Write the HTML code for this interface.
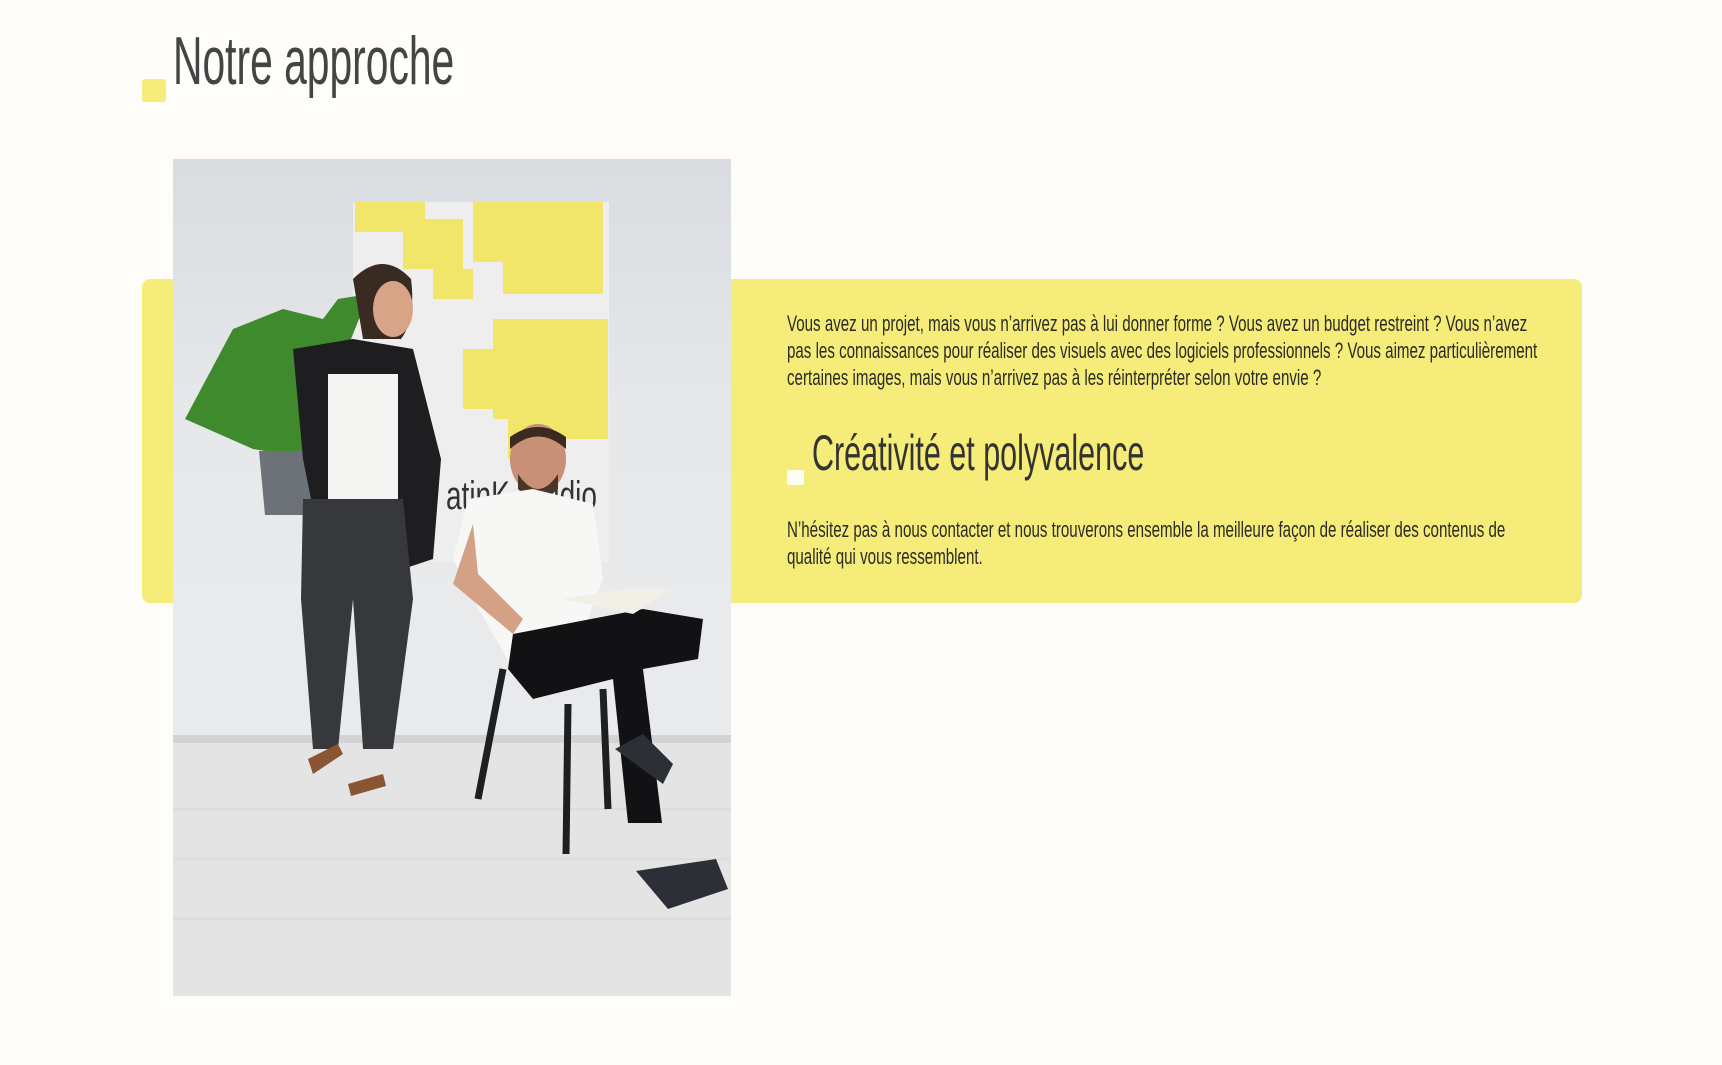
<!DOCTYPE html>
<html><head><meta charset="utf-8"><style>
html,body{margin:0;padding:0;background:#fefdf9;width:1722px;height:1065px;overflow:hidden;position:relative;font-family:"Liberation Sans Narrow","Liberation Sans",sans-serif;color:#2b2b25}
.a{position:absolute}
.sq{background:#f5ec7a;border-radius:3px}
.line{position:absolute;white-space:nowrap;transform-origin:0 0}
</style></head><body>
<div class="a sq" style="left:142px;top:79px;width:24px;height:23px"></div>
<div class="line" style="left:173px;top:22px;font-size:68px;transform:scaleX(0.6);color:#444;font-weight:300">Notre approche</div>

<div class="a" style="left:142px;top:279px;width:1440px;height:324px;background:#f5ec7a;border-radius:8px"></div>

<svg class="a" style="left:173px;top:159px" width="558" height="837" viewBox="0 0 558 837">
<defs><linearGradient id="w" x1="0" y1="0" x2="0" y2="1"><stop offset="0" stop-color="#d9dce0"/><stop offset="0.3" stop-color="#e6e8ea"/><stop offset="1" stop-color="#eceded"/></linearGradient></defs>
<rect width="558" height="837" fill="url(#w)"/>
<rect y="576" width="558" height="261" fill="#e4e4e4"/>
<rect y="576" width="558" height="8" fill="#d3d3d3"/>
<g stroke="#d6d6d6"><line x1="0" y1="650" x2="558" y2="650"/><line x1="0" y1="700" x2="558" y2="700"/><line x1="0" y1="760" x2="558" y2="760"/></g>
<rect x="180" y="43" width="256" height="360" fill="#eeeeee"/>
<path d="M182 43h70v30h-70zM230 60h60v50h-60zM300 43h130v90h-80v-30h-50zM330 100h100v35h-100zM320 160h115v120h-50v20h-50v-40h-15zM260 110h40v30h-40zM290 190h40v60h-40z" fill="#f1e66a"/>
<text x="260" y="350" font-family="Liberation Sans" font-size="40" fill="#333" transform="scale(0.7 1) translate(130 0)">atinK Studio</text>
<path d="M12 260 L60 170 L110 150 L150 160 L165 140 L196 135 L170 200 L190 280 L140 300 L80 290 Z" fill="#3f8a2c"/>
<path d="M86 292 h64 l-6 64 h-52z" fill="#6d7278"/>
<path d="M180 120 q30 -30 58 0 q5 40 -10 60 h-38z" fill="#3a2b22"/>
<ellipse cx="220" cy="150" rx="20" ry="28" fill="#d8a488"/>
<path d="M120 190 L180 180 L240 190 L268 300 L260 400 L230 410 L150 400 L130 300Z" fill="#1e1e20"/>
<path d="M155 215 h70 v125 h-70z" fill="#f4f4f2"/>
<path d="M130 340 h100 l10 100 l-20 150 h-30 l-10 -150 l-15 150 h-25 l-12 -150z" fill="#36383b"/>
<path d="M135 600 l30 -15 l5 10 l-30 20z M175 625 l35 -10 l3 12 l-35 10z" fill="#8a5533"/>
<ellipse cx="365" cy="300" rx="28" ry="35" fill="#c89076"/>
<path d="M337 290 q28 -25 56 0 v-12 q-28 -20 -56 0z" fill="#3a2a20"/>
<path d="M345 315 q20 30 40 0 v15 q-20 20 -40 0z" fill="#4a3526"/>
<path d="M295 340 L360 330 L420 345 L430 420 L400 500 L340 510 L300 440 L280 400Z" fill="#f7f7f5"/>
<path d="M340 475 L470 450 L530 460 L525 500 L470 510 L489 664 L455 664 L440 520 L360 540 L335 510Z" fill="#121214"/>
<path d="M390 440 l60 -10 l50 0 l-40 25z" fill="#f2f0e6"/>
<path d="M395 545 l-2 150 M330 510 l-25 130 M430 530 l5 120" stroke="#1d1f22" stroke-width="7" fill="none"/>
<path d="M470 575 l30 30 l-10 20 l-48 -35 z" fill="#2c3036"/>
<path d="M463 712 l80 -12 l12 30 l-60 20 z" fill="#2c3036"/>
<path d="M300 365 l-20 60 l60 50 l10 -15 l-45 -45 z" fill="#d4a086"/>
</svg>

<div class="line" style="left:787px;top:311px;font-size:22px;transform:scaleX(0.687)">Vous avez un projet, mais vous n’arrivez pas à lui donner forme ? Vous avez un budget restreint ? Vous n’avez</div>
<div class="line" style="left:787px;top:338px;font-size:22px;transform:scaleX(0.687)">pas les connaissances pour réaliser des visuels avec des logiciels professionnels ? Vous aimez particulièrement</div>
<div class="line" style="left:787px;top:365px;font-size:22px;transform:scaleX(0.687)">certaines images, mais vous n’arrivez pas à les réinterpréter selon votre envie ?</div>

<div class="a" style="left:787px;top:470px;width:17px;height:15px;background:#fefdf0;border-radius:2px"></div>
<div class="line" style="left:812px;top:424px;font-size:50px;transform:scaleX(0.61);color:#333">Créativité et polyvalence</div>

<div class="line" style="left:787px;top:517px;font-size:22px;transform:scaleX(0.687)">N’hésitez pas à nous contacter et nous trouverons ensemble la meilleure façon de réaliser des contenus de</div>
<div class="line" style="left:787px;top:544px;font-size:22px;transform:scaleX(0.687)">qualité qui vous ressemblent.</div>
</body></html>
